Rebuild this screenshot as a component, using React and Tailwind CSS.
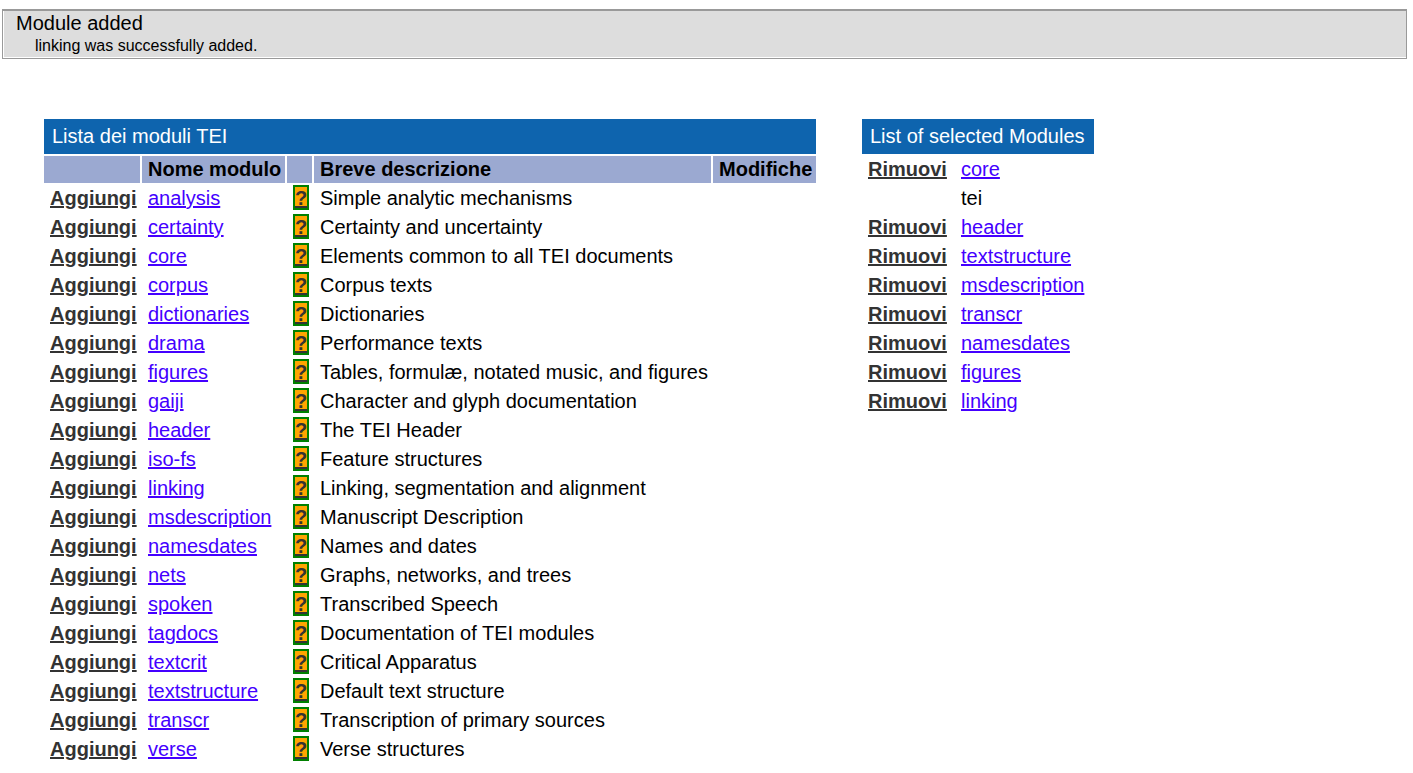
import React from "react";

const modules = [
  ["analysis", "Simple analytic mechanisms"],
  ["certainty", "Certainty and uncertainty"],
  ["core", "Elements common to all TEI documents"],
  ["corpus", "Corpus texts"],
  ["dictionaries", "Dictionaries"],
  ["drama", "Performance texts"],
  ["figures", "Tables, formulæ, notated music, and figures"],
  ["gaiji", "Character and glyph documentation"],
  ["header", "The TEI Header"],
  ["iso-fs", "Feature structures"],
  ["linking", "Linking, segmentation and alignment"],
  ["msdescription", "Manuscript Description"],
  ["namesdates", "Names and dates"],
  ["nets", "Graphs, networks, and trees"],
  ["spoken", "Transcribed Speech"],
  ["tagdocs", "Documentation of TEI modules"],
  ["textcrit", "Critical Apparatus"],
  ["textstructure", "Default text structure"],
  ["transcr", "Transcription of primary sources"],
  ["verse", "Verse structures"],
];

const selected = [
  "core",
  "tei",
  "header",
  "textstructure",
  "msdescription",
  "transcr",
  "namesdates",
  "figures",
  "linking",
];

const linkStyle = "text-[#4400ff] underline decoration-2 underline-offset-1";
const actionStyle = "font-bold text-[#333333] underline decoration-2 underline-offset-1";
const titleStyle =
  "h-[35px] bg-[#0e64ae] px-2 py-0 text-left align-middle font-normal text-white";
const headStyle = "h-[27px] bg-[#9ba9d1] py-0 pr-1 pl-1.5 text-left font-bold";
const cellStyle = "h-[27px] py-0 pr-1 pl-1.5";

function ModuleTable() {
  return (
    <table className="w-[776px] table-fixed border-separate border-spacing-[2px] whitespace-nowrap">
      <colgroup>
        <col className="w-[96px]" />
        <col className="w-[143px]" />
        <col className="w-[25px]" />
        <col className="w-[397px]" />
        <col className="w-[103px]" />
      </colgroup>
      <thead>
        <tr>
          <th colSpan={5} className={titleStyle}>Lista dei moduli TEI</th>
        </tr>
        <tr>
          <td className={headStyle}></td>
          <th className={headStyle}>Nome modulo</th>
          <td className={headStyle}></td>
          <th className={headStyle}>Breve descrizione</th>
          <th className={headStyle}>Modifiche</th>
        </tr>
      </thead>
      <tbody>
        {modules.map(([name, description]) => (
          <tr key={name}>
            <td className={cellStyle}>
              <a href={`#add-${name}`} className={actionStyle}>Aggiungi</a>
            </td>
            <td className={cellStyle}>
              <a href={`#${name}`} className={linkStyle}>{name}</a>
            </td>
            <td className="h-[27px] py-0 pl-1.5 align-top">
              <a
                href={`#help-${name}`}
                className="block h-[25px] w-4 border-2 border-[#008000] bg-[#ffa500] text-center font-bold text-[#333333] underline decoration-2 underline-offset-1"
              >
                ?
              </a>
            </td>
            <td className={cellStyle}>{description}</td>
            <td className={cellStyle}></td>
          </tr>
        ))}
      </tbody>
    </table>
  );
}

function SelectedTable() {
  return (
    <table className="w-[236px] table-fixed border-separate border-spacing-[2px] whitespace-nowrap">
      <colgroup>
        <col className="w-[91px]" />
        <col className="w-[139px]" />
      </colgroup>
      <thead>
        <tr>
          <th colSpan={2} className={titleStyle}>List of selected Modules</th>
        </tr>
      </thead>
      <tbody>
        {selected.map((name) => (
          <tr key={name}>
            <td className={cellStyle}>
              {name !== "tei" && (
                <a href={`#remove-${name}`} className={actionStyle}>Rimuovi</a>
              )}
            </td>
            <td className={cellStyle}>
              {name === "tei" ? (
                name
              ) : (
                <a href={`#${name}`} className={linkStyle}>{name}</a>
              )}
            </td>
          </tr>
        ))}
      </tbody>
    </table>
  );
}

export default function App() {
  return (
    <div className="bg-white pt-[9px] font-['Liberation_Sans',Arial,sans-serif] text-[20px] leading-[23px] text-black">
      <div
        role="status"
        className="mr-1.5 ml-0.5 border border-t-2 border-[#999999] bg-white pb-px pl-px"
      >
        <div className="bg-[#dddddd] pt-px pl-3">
          <p>Module added</p>
          <p className="pl-[19px] text-[16px] leading-[22px]">linking was successfully added.</p>
        </div>
      </div>
      <main className="flex items-start gap-[42px] pt-[58px] pl-[42px]">
        <ModuleTable />
        <SelectedTable />
      </main>
    </div>
  );
}
